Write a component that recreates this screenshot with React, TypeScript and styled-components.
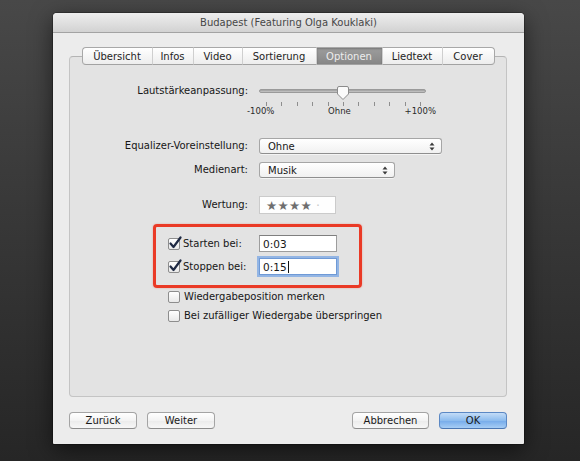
import styled, { createGlobalStyle } from 'styled-components';

const GlobalStyle = createGlobalStyle`
  html, body {
    margin: 0;
    padding: 0;
    background: #2c2c2c;
  }
  body {
    font-family: "DejaVu Sans", "Liberation Sans", sans-serif;
    font-size: 10px;
    color: #161616;
  }
`;

const tabs = [
  { label: 'Übersicht', width: 69 },
  { label: 'Infos', width: 40 },
  { label: 'Video', width: 48 },
  { label: 'Sortierung', width: 73 },
  { label: 'Optionen', width: 65, active: true },
  { label: 'Liedtext', width: 59 },
  { label: 'Cover', width: 51 },
];

const ticks = Array.from({ length: 11 }, (_, i) => i);

function UpDownArrows() {
  return (
    <svg width="6" height="9" viewBox="0 0 6 9">
      <path d="M3 0.5 L5.5 3.5 L0.5 3.5 Z" fill="#3a3a3a" />
      <path d="M3 8.5 L5.5 5.5 L0.5 5.5 Z" fill="#3a3a3a" />
    </svg>
  );
}

function CheckBox({ checked }: { checked?: boolean }) {
  return (
    <Box12>
      {checked && (
        <CheckMark width="14" height="14" viewBox="0 0 14 14">
          <path
            d="M2.5 7.5 L5.5 11 L12.5 1.5"
            fill="none"
            stroke="#1f2a44"
            strokeWidth="2.2"
            strokeLinecap="round"
            strokeLinejoin="round"
          />
        </CheckMark>
      )}
    </Box12>
  );
}

export default function App() {
  return (
    <>
      <GlobalStyle />
      <Page>
        <Window>
          <TitleBar>Budapest (Featuring Olga Kouklaki)</TitleBar>
          <Body>
            <TabStrip>
              {tabs.map((t) => (
                <Tab key={t.label} $w={t.width} $active={!!t.active}>
                  {t.label}
                </Tab>
              ))}
            </TabStrip>
            <GroupBox>
              <SliderRow>
                <Label>Lautstärkeanpassung:</Label>
                <Slider>
                  <TrackArea>
                    <Track />
                    <Thumb width="14" height="16" viewBox="0 0 14 16">
                      <path
                        d="M1.5 3 Q1.5 1.5 3 1.5 H11 Q12.5 1.5 12.5 3 V9 L7 14.5 L1.5 9 Z"
                        fill="#fbfbfb"
                        stroke="#8c8c8c"
                        strokeWidth="1"
                      />
                    </Thumb>
                  </TrackArea>
                  <Ticks>
                    {ticks.map((i) => (
                      <Tick key={i} />
                    ))}
                  </Ticks>
                  <TickLabels>
                    <span>-100%</span>
                    <span>Ohne</span>
                    <span>+100%</span>
                  </TickLabels>
                </Slider>
              </SliderRow>

              <FormRow $mt={21}>
                <Label>Equalizer-Voreinstellung:</Label>
                <Popup $w={183}>
                  Ohne
                  <UpDownArrows />
                </Popup>
              </FormRow>

              <FormRow $mt={8}>
                <Label>Medienart:</Label>
                <Popup $w={136}>
                  Musik
                  <UpDownArrows />
                </Popup>
              </FormRow>

              <FormRow $mt={18}>
                <Label>Wertung:</Label>
                <Rating>
                  ★★★★<Dot>·</Dot>
                </Rating>
              </FormRow>

              <Highlight>
                <TimeRow>
                  <CheckLabel>
                    <CheckBox checked />
                    Starten bei:
                  </CheckLabel>
                  <TextField>0:03</TextField>
                </TimeRow>
                <TimeRow>
                  <CheckLabel>
                    <CheckBox checked />
                    Stoppen bei:
                  </CheckLabel>
                  <TextField $focused>
                    0:15
                    <Caret />
                  </TextField>
                </TimeRow>
              </Highlight>

              <OptionRow $mt={2}>
                <CheckBox />
                Wiedergabeposition merken
              </OptionRow>
              <OptionRow $mt={5}>
                <CheckBox />
                Bei zufälliger Wiedergabe überspringen
              </OptionRow>
            </GroupBox>

            <ButtonBar>
              <ButtonGroup>
                <PushButton $w={68}>Zurück</PushButton>
                <PushButton $w={68}>Weiter</PushButton>
              </ButtonGroup>
              <ButtonGroup>
                <PushButton $w={77}>Abbrechen</PushButton>
                <PushButton $w={68} $primary>
                  OK
                </PushButton>
              </ButtonGroup>
            </ButtonBar>
          </Body>
        </Window>
      </Page>
    </>
  );
}

const Page = styled.div`
  width: 580px;
  height: 461px;
  box-sizing: border-box;
  padding: 13px 0 0 53px;
  background: linear-gradient(#484848, #3a3a3a 40%, #262626);
  overflow: hidden;
`;

const Window = styled.div`
  width: 471px;
  height: 431px;
  background: #ececec;
  border-radius: 4px 4px 1px 1px;
  box-shadow: 0 6px 22px rgba(0, 0, 0, 0.55), 0 0 0 1px rgba(0, 0, 0, 0.25);
  display: flex;
  flex-direction: column;
  overflow: hidden;
`;

const TitleBar = styled.div`
  height: 19px;
  flex: 0 0 auto;
  display: flex;
  align-items: center;
  justify-content: center;
  background: linear-gradient(#eeeeee, #d2d2d2);
  border-bottom: 1px solid #a3a3a3;
  color: #474747;
  font-size: 10px;
`;

const Body = styled.div`
  display: flex;
  flex-direction: column;
  padding: 14px 17px 0 16px;
`;

const TabStrip = styled.div`
  display: flex;
  justify-content: center;
  margin-bottom: -9px;
  position: relative;
  z-index: 1;
`;

const Tab = styled.div<{ $w: number; $active: boolean }>`
  width: ${({ $w }) => $w}px;
  height: 16px;
  box-sizing: content-box;
  display: flex;
  align-items: center;
  justify-content: center;
  border-top: 1px solid #a8a8a8;
  border-bottom: 1px solid #a2a2a2;
  border-left: 1px solid #cfcfcf;
  background: ${({ $active }) =>
    $active
      ? 'linear-gradient(#9d9d9d, #878787)'
      : 'linear-gradient(#ffffff, #ededed)'};
  color: ${({ $active }) => ($active ? '#ededed' : '#1e1e1e')};
  box-shadow: ${({ $active }) =>
    $active ? 'inset 0 1px 2px rgba(0,0,0,0.25)' : 'none'};

  &:first-child {
    border-left: 1px solid #a8a8a8;
    border-radius: 4px 0 0 4px;
  }
  &:last-child {
    border-right: 1px solid #a8a8a8;
    border-radius: 0 4px 4px 0;
  }
`;

const GroupBox = styled.div`
  height: 341px;
  box-sizing: border-box;
  background: #e3e3e3;
  border: 1px solid #c4c4c4;
  border-top-color: #b4b4b4;
  border-radius: 4px;
  padding-top: 27px;
  display: flex;
  flex-direction: column;
`;

const FormRow = styled.div<{ $mt: number }>`
  display: flex;
  align-items: center;
  gap: 11px;
  margin-top: ${({ $mt }) => $mt}px;
`;

const SliderRow = styled.div`
  display: flex;
  align-items: flex-start;
  gap: 11px;
`;

const Label = styled.div`
  width: 178px;
  flex: 0 0 auto;
  text-align: right;
  line-height: 14px;
  white-space: nowrap;
`;

const Slider = styled.div`
  width: 167px;
  display: flex;
  flex-direction: column;
`;

const TrackArea = styled.div`
  position: relative;
  height: 14px;
  display: flex;
  align-items: center;
`;

const Track = styled.div`
  width: 100%;
  height: 4px;
  border-radius: 2px;
  background: linear-gradient(#9c9c9c, #c8c8c8);
  border: 1px solid #9a9a9a;
  box-sizing: border-box;
`;

const Thumb = styled.svg`
  position: absolute;
  left: 77px;
  top: 1px;
`;

const Ticks = styled.div`
  display: flex;
  justify-content: space-between;
  margin: 4px 5px 0 7px;
`;

const Tick = styled.div`
  width: 1px;
  height: 4px;
  background: #8e8e8e;
`;

const TickLabels = styled.div`
  display: flex;
  justify-content: space-between;
  margin: 0 -10px 0 -12px;
  font-size: 8.5px;
  line-height: 11px;
  color: #2a2a2a;
`;

const Popup = styled.div<{ $w: number }>`
  width: ${({ $w }) => $w}px;
  height: 16px;
  box-sizing: border-box;
  display: flex;
  align-items: center;
  justify-content: space-between;
  padding: 0 6px 0 8px;
  background: linear-gradient(#ffffff, #f1f1f1);
  border: 1px solid #a6a6a6;
  border-bottom-color: #8f8f8f;
  border-radius: 3px;
  box-shadow: 0 1px 0 rgba(255, 255, 255, 0.6);
`;

const Rating = styled.div`
  width: 77px;
  height: 18px;
  box-sizing: border-box;
  display: flex;
  align-items: center;
  padding-left: 6px;
  background: #fefefe;
  border: 1px solid #cbcbcb;
  color: #6e6e6e;
  font-size: 12.5px;
  letter-spacing: 0.3px;
`;

const Dot = styled.span`
  color: #c9c9c9;
  margin-left: 4px;
`;

const Highlight = styled.div`
  margin: 10px 0 0 83px;
  width: 209px;
  height: 64px;
  box-sizing: border-box;
  border: 3px solid #ea3a26;
  border-radius: 4px;
  padding: 8px 0 0 12px;
  display: flex;
  flex-direction: column;
  gap: 6px;
  box-shadow: 0 0 2px rgba(234, 58, 38, 0.4);
`;

const TimeRow = styled.div`
  display: flex;
  align-items: center;
`;

const CheckLabel = styled.div`
  width: 91px;
  display: flex;
  align-items: center;
  gap: 3px;
`;

const Box12 = styled.div`
  position: relative;
  width: 12px;
  height: 12px;
  flex: 0 0 auto;
  box-sizing: border-box;
  border: 1px solid #8d8d8d;
  border-radius: 2px;
  background: linear-gradient(#ffffff, #e9e9e9);
`;

const CheckMark = styled.svg`
  position: absolute;
  left: -1px;
  top: -3px;
`;

const TextField = styled.div<{ $focused?: boolean }>`
  width: 78px;
  height: 17px;
  box-sizing: border-box;
  display: flex;
  align-items: center;
  padding-left: 3px;
  background: #ffffff;
  border: 1px solid ${({ $focused }) => ($focused ? '#6f9ad6' : '#9d9d9d')};
  border-top-color: ${({ $focused }) => ($focused ? '#6f9ad6' : '#7f7f7f')};
  box-shadow: ${({ $focused }) =>
    $focused ? '0 0 0 2px rgba(120, 165, 228, 0.75)' : 'none'};
  font-size: 10.5px;
`;

const Caret = styled.span`
  width: 1px;
  height: 12px;
  background: #111;
  margin-left: 1px;
`;

const OptionRow = styled.div<{ $mt: number }>`
  display: flex;
  align-items: center;
  gap: 4px;
  margin: ${({ $mt }) => $mt}px 0 0 98px;
  line-height: 14px;
`;

const ButtonBar = styled.div`
  display: flex;
  justify-content: space-between;
  margin-top: 15px;
`;

const ButtonGroup = styled.div`
  display: flex;
  gap: 10px;
`;

const PushButton = styled.div<{ $w: number; $primary?: boolean }>`
  width: ${({ $w }) => $w}px;
  height: 17px;
  box-sizing: border-box;
  display: flex;
  align-items: center;
  justify-content: center;
  border-radius: 4px;
  border: 1px solid ${({ $primary }) => ($primary ? '#5b88c4' : '#a4a4a4')};
  border-bottom-color: ${({ $primary }) => ($primary ? '#4a76b2' : '#8c8c8c')};
  background: ${({ $primary }) =>
    $primary
      ? 'linear-gradient(#c3dcf7, #8dbcee 50%, #74aaea 51%, #a6cdf5)'
      : 'linear-gradient(#ffffff, #f3f3f3 50%, #ebebeb 51%, #f7f7f7)'};
  color: #1a1a1a;
`;
